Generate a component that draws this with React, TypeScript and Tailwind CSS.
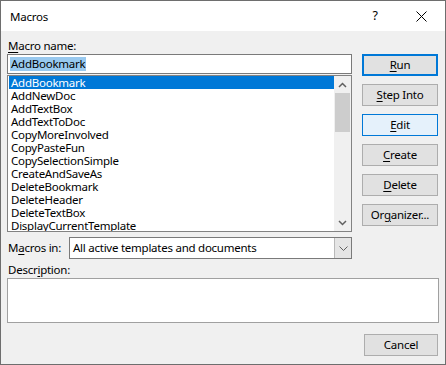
import React from "react";

const items = [
  "AddBookmark",
  "AddNewDoc",
  "AddTextBox",
  "AddTextToDoc",
  "CopyMoreInvolved",
  "CopyPasteFun",
  "CopySelectionSimple",
  "CreateAndSaveAs",
  "DeleteBookmark",
  "DeleteHeader",
  "DeleteTextBox",
  "DisplayCurrentTemplate",
];

function Btn({
  children,
  variant = "normal",
}: {
  children: React.ReactNode;
  variant?: "normal" | "default" | "hover";
}) {
  const cls =
    variant === "default"
      ? "border-2 border-[#0078d7] bg-[#e1e1e1]"
      : variant === "hover"
      ? "border border-[#0078d7] bg-[#e5f1fb]"
      : "border border-[#adadad] bg-[#e1e1e1]";
  return (
    <div
      className={`h-[22px] w-[76px] flex items-center justify-center text-[11.5px] leading-[14px] text-black ${cls}`}
    >
      <span>{children}</span>
    </div>
  );
}

function U({ children }: { children: React.ReactNode }) {
  return <span className="underline underline-offset-2 decoration-1">{children}</span>;
}

export default function App() {
  return (
    <div
      className="w-[446px] h-[365px] border border-[#6e6e6e] bg-[#f0f0f0] flex flex-col text-black overflow-hidden tracking-[-0.25px]"
      style={{ fontFamily: '"Segoe UI", "Noto Sans", sans-serif' }}
    >
      {/* title bar */}
      <div className="h-[30px] bg-white flex items-center shrink-0">
        <div className="pl-[9px] text-[11.5px] leading-[16px] flex-1 pt-[1px]">Macros</div>
        <div className="w-[46px] h-[30px] flex items-center justify-center text-[12.5px] leading-[16px]">?</div>
        <div className="w-[46px] h-[30px] flex items-center justify-center mr-[1px]">
          <svg width="11" height="11" viewBox="0 0 11 11">
            <path d="M0.5 0.5 L10.5 10.5 M10.5 0.5 L0.5 10.5" stroke="#000" strokeWidth="1" />
          </svg>
        </div>
      </div>

      {/* body */}
      <div className="flex flex-col pl-[6px]">
        <div className="flex">
          {/* left column */}
          <div className="w-[345px] flex flex-col pt-[7px]">
            <div className="h-[16px] text-[11.5px] leading-[16px] pl-[1px]">
              <U>M</U>acro name:
            </div>
            <div className="h-[20px] border border-[#7a7a7a] bg-white flex items-center pl-[2px]">
              <span className="bg-[#99c9ef] text-[11.5px] leading-[14px] h-[14px] px-[1px]">AddBookmark</span>
            </div>
            <div className="mt-[1px] h-[157px] border border-[#828282] bg-white flex overflow-hidden">
              <div className="flex-1 flex flex-col pl-[1px] overflow-hidden">
                {items.map((it, i) => (
                  <div
                    key={it}
                    className={`h-[13px] shrink-0 text-[11.5px] leading-[13px] pl-[2px] ${
                      i === 0 ? "bg-[#0078d7] text-white" : "text-black"
                    }`}
                  >
                    {it}
                  </div>
                ))}
              </div>
              {/* scrollbar */}
              <div className="w-[17px] bg-[#f0f0f0] flex flex-col items-center">
                <div className="h-[17px] w-full flex items-center justify-center">
                  <svg width="9" height="6" viewBox="0 0 9 6">
                    <path d="M1 5 L4.5 1.5 L8 5" stroke="#606060" strokeWidth="1.5" fill="none" />
                  </svg>
                </div>
                <div className="w-[15px] h-[39px] bg-[#cdcdcd]" />
                <div className="flex-1" />
                <div className="h-[17px] w-full flex items-center justify-center">
                  <svg width="9" height="6" viewBox="0 0 9 6">
                    <path d="M1 1 L4.5 4.5 L8 1" stroke="#606060" strokeWidth="1.5" fill="none" />
                  </svg>
                </div>
              </div>
            </div>
          </div>
          {/* right column */}
          <div className="ml-[10px] pt-[23px] flex flex-col gap-[8px]">
            <Btn variant="default">
              <U>R</U>un
            </Btn>
            <Btn>
              <U>S</U>tep Into
            </Btn>
            <Btn variant="hover">
              <U>E</U>dit
            </Btn>
            <Btn>
              <U>C</U>reate
            </Btn>
            <Btn>
              <U>D</U>elete
            </Btn>
            <Btn>
              Or<U>g</U>anizer...
            </Btn>
          </div>
        </div>

        {/* macros in */}
        <div className="mt-[5px] flex items-center w-[345px]">
          <div className="w-[62px] pl-[1px] text-[11.5px] leading-[16px]">
            M<U>a</U>cros in:
          </div>
          <div className="flex-1 h-[22px] border border-[#7a7a7a] bg-white flex">
            <div className="flex-1 pl-[3px] text-[11.5px] leading-[20px]">
              All active templates and documents
            </div>
            <div className="w-[17px] h-full bg-[#e5e5e5] border-l border-[#b9b9b9] flex items-center justify-center">
              <svg width="9" height="5" viewBox="0 0 9 5">
                <path d="M0.5 0.5 L4.5 4.5 L8.5 0.5" stroke="#606060" strokeWidth="1" fill="none" />
              </svg>
            </div>
          </div>
        </div>

        {/* description */}
        <div className="mt-[3px] h-[16px] pl-[1px] text-[11.5px] leading-[16px]">
          Descr<U>i</U>ption:
        </div>
        <div className="w-[432px] h-[45px] border border-[#a0a0a0] bg-white" />

        <div className="mt-[11px] w-[432px] flex justify-end">
          <div className="h-[22px] w-[74px] border border-[#adadad] bg-[#e1e1e1] flex items-center justify-center text-[11.5px] leading-[14px] mr-[1px]">
            Cancel
          </div>
        </div>
      </div>
    </div>
  );
}
